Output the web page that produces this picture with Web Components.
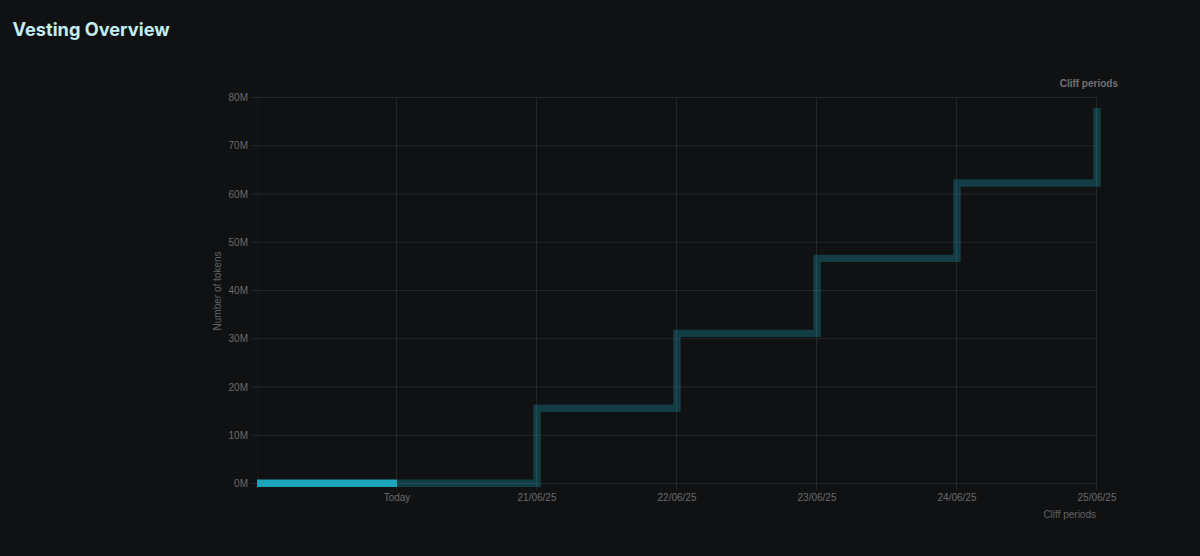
<!DOCTYPE html>
<html>
<head>
<meta charset="utf-8">
<title>Vesting Overview</title>
<style>
  html, body { margin: 0; background: #0f1113; height: 100%; overflow: hidden; }
</style>
</head>
<body>
<vesting-section>
  <span slot="title">Vesting Overview</span>
  <vesting-chart></vesting-chart>
</vesting-section>

<script>
class VestingSection extends HTMLElement {
  constructor() {
    super();
    this.attachShadow({ mode: "open" });
    this.shadowRoot.innerHTML = `
    <style>
      :host {
        display: flex;
        flex-direction: column;
        height: 556px;
        box-sizing: border-box;
        padding: 18px 0 0 12.5px;
        background: #0f1113;
      }
      h2 {
        margin: 0;
        font: 700 18.2px/23px Inter, "Liberation Sans", sans-serif;
        color: #c3eef5;
      }
    </style>
    <h2><slot name="title"></slot></h2>
    <slot></slot>
    `;
  }
}

class VestingChart extends HTMLElement {
  constructor() {
    super();
    this.attachShadow({ mode: "open" });

    // plot area, in the coordinates of the svg (which starts at the page's 0,0 x)
    const left = 257, stepX = 140, top = 97.5, stepY = 48.25;
    const xLabels = ["Today", "21/06/25", "22/06/25", "23/06/25", "24/06/25", "25/06/25"];
    const yLabels = ["80M", "70M", "60M", "50M", "40M", "30M", "20M", "10M", "0M"];
    const bottom = top + stepY * 8;
    const right = left + stepX * 6;
    const offset = 41; // svg top in the page, below the title

    let grid = "";
    yLabels.forEach((label, i) => {
      const y = top + i * stepY;
      grid += `<line class="grid" x1="251" x2="${right}" y1="${y}" y2="${y}"/>`;
      grid += `<text class="label" x="248" y="${y + 3.5}" text-anchor="end">${label}</text>`;
    });
    grid += `<line class="edge" x1="${left + 0.5}" x2="${left + 0.5}" y1="${top}" y2="${bottom}"/>`;
    xLabels.forEach((label, i) => {
      const x = left + (i + 1) * stepX;
      grid += `<line class="grid" x1="${x - 0.5}" x2="${x - 0.5}" y1="${top}" y2="${bottom + 6}"/>`;
      grid += `<text class="label" x="${x}" y="501" text-anchor="middle">${label}</text>`;
    });

    // cliff steps, one every day after today
    const levels = [483.3, 408.3, 333.4, 258.4, 183, 108];
    let d = `M397 ${levels[0]}L537 ${levels[0]}`;
    for (let i = 1; i < 5; i++) {
      const x = 537 + (i - 1) * stepX;
      d += `L${x} ${levels[i]}L${x + stepX} ${levels[i]}`;
    }
    d += `L1097 ${levels[5]}`;

    this.shadowRoot.innerHTML = `
    <style>
      :host {
        display: block;
        margin-left: -12.5px;
        height: 515px;
      }
      svg {
        display: block;
        width: 1200px;
        height: 515px;
        font-family: "Liberation Sans", Arial, sans-serif;
        font-size: 10px;
      }
      .grid { stroke: rgba(255, 255, 255, 0.085); stroke-width: 1; }
      .edge { stroke: rgba(255, 255, 255, 0.03); stroke-width: 1; }
      .label { fill: #6b6b6b; }
      .name { fill: #646464; }
      .legend { fill: #727272; font-weight: 700; }
    </style>
    <svg viewBox="0 ${offset} 1200 515" role="img" aria-label="Vesting chart">
      <text class="legend" x="1118" y="87" text-anchor="end">Cliff periods</text>
      ${grid}
      <text class="name" transform="translate(220.5 291) rotate(-90)" text-anchor="middle">Number of tokens</text>
      <text class="name" x="1096" y="518" text-anchor="end">Cliff periods</text>
      <path d="${d}" fill="none" stroke="#1fa6ba" stroke-opacity="0.3" stroke-width="7.4" stroke-linejoin="miter"/>
      <line x1="257" x2="397" y1="${levels[0]}" y2="${levels[0]}" stroke="#1ba5ba" stroke-width="7.4"/>
    </svg>
    `;
  }
}

customElements.define("vesting-section", VestingSection);
customElements.define("vesting-chart", VestingChart);
</script>
</body>
</html>
